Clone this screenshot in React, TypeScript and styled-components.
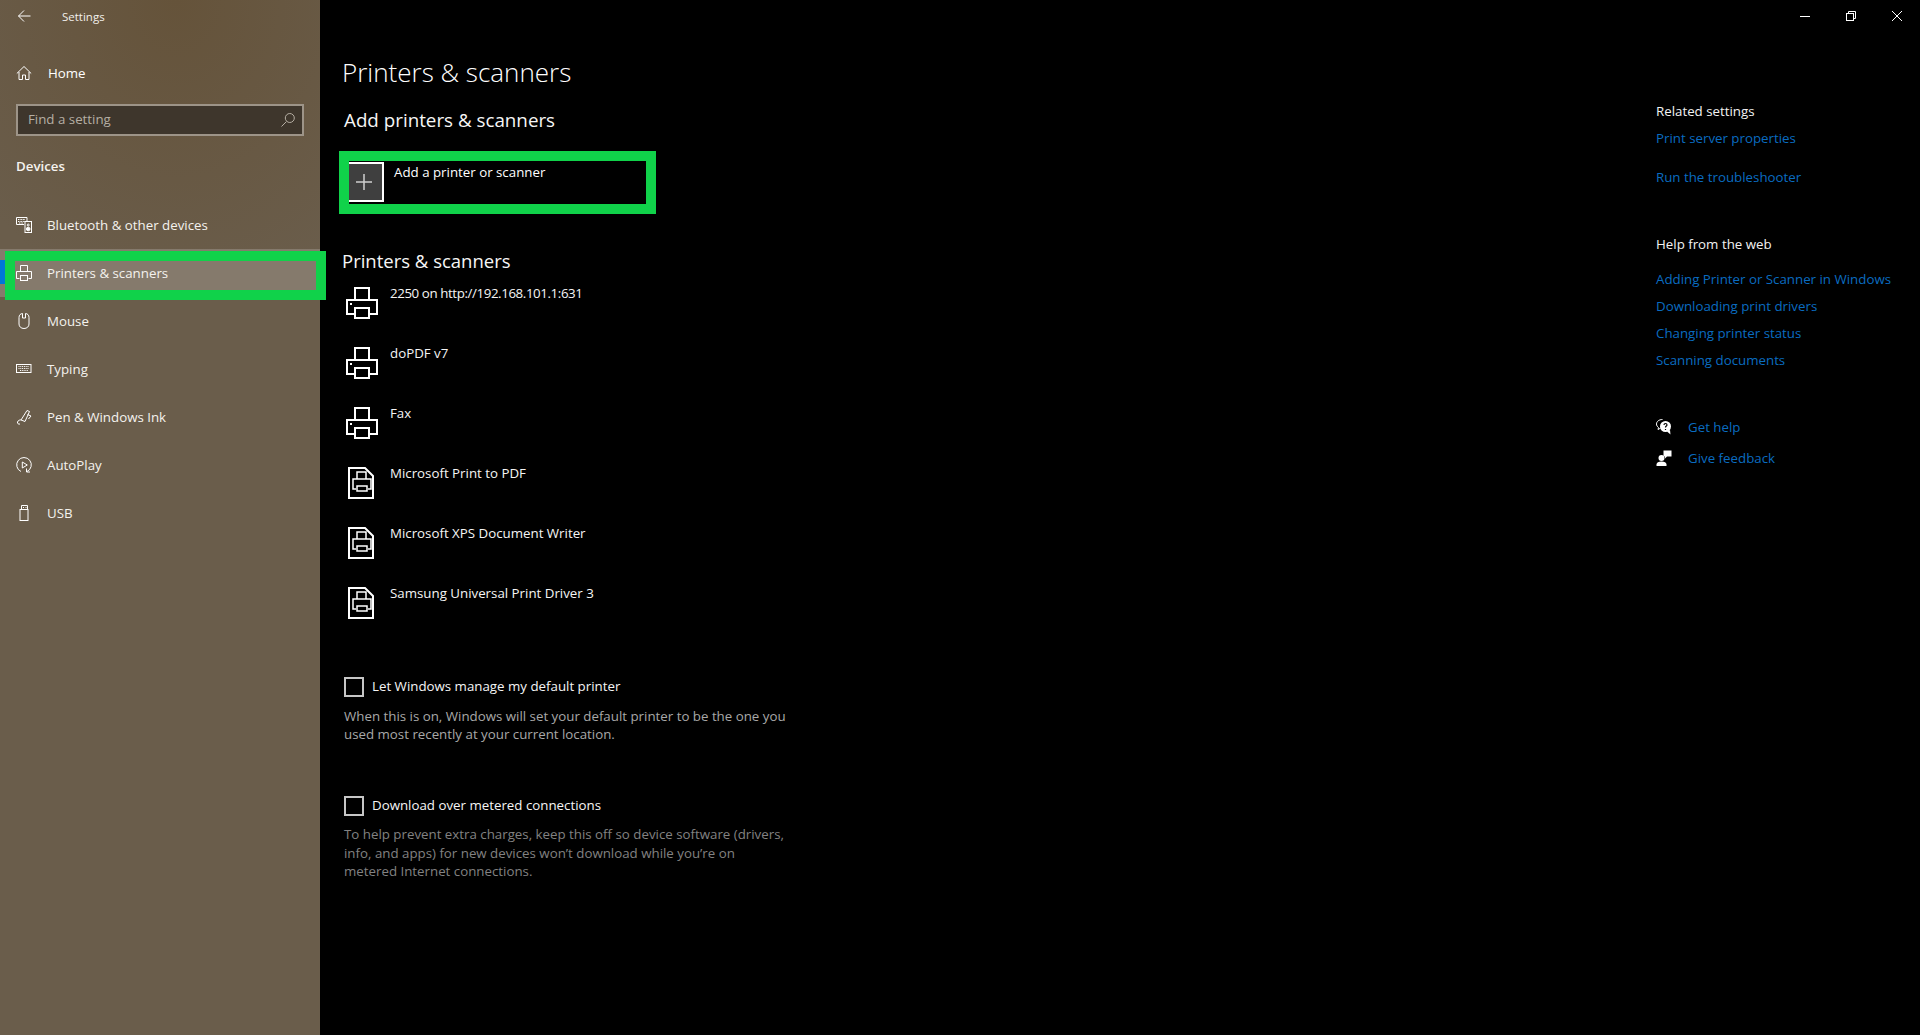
import React from "react";
import styled, { createGlobalStyle } from "styled-components";

const Global = createGlobalStyle`
  html, body { margin: 0; padding: 0; background: #000; }
  * { box-sizing: border-box; }
  body { font-family: "Open Sans", "Noto Sans", "Liberation Sans", sans-serif; font-size: 13.3px; color: #fff; }
`;

const Page = styled.div`
  display: flex;
  width: 1920px;
  height: 1035px;
  overflow: hidden;
  background: #000;
`;

const Sidebar = styled.aside`
  flex: 0 0 320px;
  height: 100%;
  display: flex;
  flex-direction: column;
  background: radial-gradient(ellipse 260px 300px at 55% 0, #65533a 0%, #6a5d4b 100%);
`;

const TitleBar = styled.div`
  height: 34px;
  display: flex;
  align-items: center;
  padding: 0 0 2px 16px;
  font-size: 11.5px;
  color: #f2f0ec;
`;

const BackIcon = styled.svg`
  width: 16px;
  height: 16px;
  margin-right: 30px;
  margin-top: -1px;
`;

const HomeRow = styled.div`
  height: 48px;
  margin-top: 15px;
  display: flex;
  align-items: center;
  gap: 16px;
  padding-left: 16px;
  color: #fff;
`;

const IconBox = styled.svg`
  width: 16px;
  height: 16px;
  flex: 0 0 16px;
  color: #fff;
`;

const Search = styled.div`
  height: 32px;
  margin: 7px 16px 0;
  border: 2px solid #9d9488;
  background: #3e362c;
  display: flex;
  align-items: center;
  justify-content: space-between;
  padding: 0 6px 0 10px;
  color: #b5aea3;
`;

const SearchText = styled.span`
  margin-top: -2px;
`;

const SearchIcon = styled(IconBox)`
  color: #b5aea3;
`;

const SectionLabel = styled.div`
  height: 20px;
  line-height: 20px;
  margin: 20px 0 0 16px;
  font-weight: 600;
  color: #f5f3ef;
`;

const NavList = styled.nav`
  margin-top: 25px;
  display: flex;
  flex-direction: column;
`;

const NavRow = styled.div<{ $active?: boolean }>`
  position: relative;
  height: 48px;
  display: flex;
  align-items: center;
  gap: 15px;
  padding-left: 16px;
  color: #f4f2ee;
  background: ${(p) => (p.$active ? "#857a6c" : "transparent")};
`;

const Accent = styled.span`
  position: absolute;
  left: 0;
  top: 11px;
  width: 5px;
  height: 24px;
  background: #0078d7;
`;

const Callout = styled.span<{ $l: number; $t: number; $w: number; $h: number }>`
  position: absolute;
  left: ${(p) => p.$l}px;
  top: ${(p) => p.$t}px;
  width: ${(p) => p.$w}px;
  height: ${(p) => p.$h}px;
  border: 10px solid #10d24a;
  z-index: 5;
  pointer-events: none;
`;

const Main = styled.main`
  flex: 1;
  display: flex;
  flex-direction: column;
  min-width: 0;
`;

const WindowBar = styled.div`
  height: 34px;
  display: flex;
  justify-content: flex-end;
`;

const WindowButton = styled.div`
  width: 46px;
  height: 34px;
  display: flex;
  align-items: center;
  justify-content: center;
  padding-bottom: 2px;
`;

const Content = styled.div`
  flex: 1;
  display: flex;
  justify-content: space-between;
`;

const LeftColumn = styled.section`
  padding: 18px 0 0 22px;
  display: flex;
  flex-direction: column;
  align-items: flex-start;
`;

const PageTitle = styled.h1`
  margin: 0;
  font-size: 26px;
  font-weight: 300;
  line-height: 40px;
  color: #fff;
`;

const SubTitle = styled.h2<{ $top: number; $left: number; $size: number }>`
  margin: ${(p) => p.$top}px 0 0 ${(p) => p.$left}px;
  font-size: ${(p) => p.$size}px;
  font-weight: 400;
  line-height: 28px;
  color: #f6f6f6;
`;

const AddRow = styled.div`
  position: relative;
  margin: 28px 0 0 2px;
  display: flex;
  gap: 10px;
  height: 40px;
`;

const AddTile = styled.div`
  width: 40px;
  height: 40px;
  background: #3f3f3f;
  border: 2px solid #fff;
  display: flex;
  align-items: center;
  justify-content: center;
`;

const AddLabel = styled.div`
  line-height: 20px;
  color: #fff;
`;

const PrinterList = styled.div`
  margin-top: 8px;
  display: flex;
  flex-direction: column;
`;

const PrinterRow = styled.div`
  height: 60px;
  display: flex;
  gap: 12px;
  padding-left: 4px;
`;

const PrinterIcon = styled.svg`
  width: 32px;
  height: 32px;
  margin-top: 4px;
  flex: 0 0 32px;
`;

const PrinterName = styled.div<{ $tight?: boolean }>`
  line-height: 20px;
  color: #f5f5f5;
  letter-spacing: ${(p) => (p.$tight ? "-0.4px" : "0")};
`;

const CheckRow = styled.div<{ $top: number }>`
  margin: ${(p) => p.$top}px 0 0 2px;
  display: flex;
  align-items: center;
  gap: 8px;
  height: 20px;
  color: #f5f5f5;
`;

const CheckBox = styled.span`
  width: 20px;
  height: 20px;
  border: 2px solid #c6c6c6;
`;

const CheckLabel = styled.span`
  margin-top: -2px;
`;

const Description = styled.p<{ $dim?: boolean }>`
  margin: ${(p) => (p.$dim ? "9.6px" : "10px")} 0 0 2px;
  line-height: 18.4px;
  color: ${(p) => (p.$dim ? "#828282" : "#a8a8a8")};
`;

const Aside = styled.aside`
  width: 264px;
  padding-top: 67px;
  display: flex;
  flex-direction: column;
`;

const AsideHeading = styled.div<{ $top?: number }>`
  height: 20px;
  line-height: 20px;
  margin-top: ${(p) => p.$top ?? 0}px;
  color: #f2f2f2;
`;

const AsideLink = styled.a<{ $top: number }>`
  display: block;
  height: 20px;
  line-height: 20px;
  margin-top: ${(p) => p.$top}px;
  color: #0a6cc0;
`;

const HelpRow = styled.div<{ $top: number }>`
  display: flex;
  align-items: center;
  gap: 16px;
  height: 20px;
  margin-top: ${(p) => p.$top}px;
  color: #0a6cc0;
`;

const s = { fill: "none", stroke: "currentColor", strokeWidth: 1 } as const;

const navItems: { label: string; icon: React.ReactNode; active?: boolean }[] = [
  {
    label: "Bluetooth & other devices",
    icon: (
      <g {...s}>
        <path d="M11 4.500V.5H.5v7H8" />
        <path d="M2 2.500h7M2 4.500h7M3 6h4" strokeDasharray="1 .6" />
        <rect x="9" y="4.500" width="6.500" height="11" />
        <circle cx="12.200" cy="8" r="1" />
        <circle cx="12.200" cy="12" r="1.800" fill="currentColor" />
      </g>
    ),
  },
  {
    label: "Printers & scanners",
    active: true,
    icon: (
      <g {...s}>
        <path d="M4.500 6V.5h7V6" />
        <path d="M3.500 13.500H.5v-7h15v7h-3" />
        <rect x="4.500" y="10.500" width="7" height="5" />
      </g>
    ),
  },
  {
    label: "Mouse",
    icon: (
      <g {...s}>
        <path d="M6.500.5C4.500.7 3 2 3 4.500v6.500c0 2.600 2 4.500 5 4.500s5-1.900 5-4.500V4.500C13 2 11.500.7 9.500.5V5h-3z" />
      </g>
    ),
  },
  {
    label: "Typing",
    icon: (
      <g {...s}>
        <rect x=".5" y="3.500" width="14.500" height="8" />
        <path d="M2.500 5.500h10.500M2.500 7.500h10.500M4 9.500h8" strokeDasharray="1 .8" />
      </g>
    ),
  },
  {
    label: "Pen & Windows Ink",
    icon: (
      <g {...s}>
        <path d="M5 11 11 1.500l2.500 1L9 12.500z" />
        <path d="M11.500 5.500 15 7l-2.500 3" />
        <path d="M5 11c-1-.5-3 .5-3.500 2-.5 1.500 1 2.500 2.500 2" />
      </g>
    ),
  },
  {
    label: "AutoPlay",
    icon: (
      <g {...s}>
        <path d="M5 14.500A7.300 7.300 0 1 1 11 14.500" />
        <path d="M6.300 5v6l5-3z" />
        <path d="M10.500 11.500v3.500H14" />
      </g>
    ),
  },
  {
    label: "USB",
    icon: (
      <g {...s}>
        <path d="M5.500 4.500V.5h6v4" />
        <rect x="4" y="4.500" width="8" height="11" />
        <path d="M7 2.500h1M9.500 2.500h1" />
      </g>
    ),
  },
];

const Printer = () => (
  <PrinterIcon viewBox="0 0 32 32" fill="none" stroke="#fff" strokeWidth={2}>
    <path d="M9 12V1h14v11" />
    <path d="M8 27H1V13h30v14h-7" />
    <rect x="9" y="21" width="14" height="10" />
    <rect x="4" y="16" width="2" height="2" fill="#fff" stroke="none" />
  </PrinterIcon>
);

const DocPrinter = () => (
  <PrinterIcon viewBox="0 0 32 32" fill="none" stroke="#fff" strokeWidth={2}>
    <path d="M3 1h16l8 8v22H3z" />
    <path d="M11 12V5h9v7" strokeWidth={1.500} />
    <path d="M10 22H7V12h18v10h-3" strokeWidth={1.500} />
    <rect x="11" y="19" width="10" height="5" strokeWidth={1.500} />
  </PrinterIcon>
);

const printers = [
  { name: "2250 on http://192.168.101.1:631", doc: false, tight: true },
  { name: "doPDF v7", doc: false },
  { name: "Fax", doc: false },
  { name: "Microsoft Print to PDF", doc: true },
  { name: "Microsoft XPS Document Writer", doc: true },
  { name: "Samsung Universal Print Driver 3", doc: true },
];

export default function App() {
  return (
    <Page>
      <Global />
      <Sidebar>
        <TitleBar>
          <BackIcon viewBox="0 0 16 16" fill="none" stroke="#fff" strokeWidth={1}>
            <path d="M2.500 8H14.500M8 2.500 2.500 8 8 13.500" />
          </BackIcon>
          Settings
        </TitleBar>
        <HomeRow>
          <IconBox viewBox="0 0 16 16">
            <g {...s}>
              <path d="M.8 8.500 8 1.500l7.200 7" />
              <path d="M3 7v7.500h3.500V10h3v4.500H13V7" />
            </g>
          </IconBox>
          Home
        </HomeRow>
        <Search>
          <SearchText>Find a setting</SearchText>
          <SearchIcon viewBox="0 0 16 16">
            <g {...s}>
              <circle cx="9.800" cy="6" r="4.500" />
              <path d="M6.500 9.500 1.500 14.500" />
            </g>
          </SearchIcon>
        </Search>
        <SectionLabel>Devices</SectionLabel>
        <NavList>
          {navItems.map((item) => (
            <NavRow key={item.label} $active={item.active}>
              {item.active && <Accent />}
              <IconBox viewBox="0 0 16 16">{item.icon}</IconBox>
              {item.label}
              {item.active && <Callout $l={5} $t={2} $w={321} $h={49} />}
            </NavRow>
          ))}
        </NavList>
      </Sidebar>
      <Main>
        <WindowBar>
          <WindowButton>
            <svg width="10" height="10" viewBox="0 0 10 10" stroke="#fff" strokeWidth={1}>
              <path d="M0 5.500h10" />
            </svg>
          </WindowButton>
          <WindowButton>
            <svg width="10" height="10" viewBox="0 0 10 10" fill="none" stroke="#fff" strokeWidth={1}>
              <rect x=".5" y="2.500" width="7" height="7" />
              <path d="M2.500 2.500V.5h7v7h-2" />
            </svg>
          </WindowButton>
          <WindowButton>
            <svg width="10" height="10" viewBox="0 0 10 10" stroke="#fff" strokeWidth={1}>
              <path d="M0 0l10 10M10 0 0 10" />
            </svg>
          </WindowButton>
        </WindowBar>
        <Content>
          <LeftColumn>
            <PageTitle>Printers &amp; scanners</PageTitle>
            <SubTitle $top={14} $left={2} $size={18.8}>Add printers &amp; scanners</SubTitle>
            <AddRow>
              <AddTile>
                <svg width="16" height="16" viewBox="0 0 16 16" stroke="#d0d0d0" strokeWidth={1.500}>
                  <path d="M8 0v16M0 8h16" />
                </svg>
              </AddTile>
              <AddLabel>Add a printer or scanner</AddLabel>
              <Callout $l={-5} $t={-11} $w={317} $h={63} />
            </AddRow>
            <SubTitle $top={45} $left={0} $size={18.5}>Printers &amp; scanners</SubTitle>
            <PrinterList>
              {printers.map((p) => (
                <PrinterRow key={p.name}>
                  {p.doc ? <DocPrinter /> : <Printer />}
                  <PrinterName $tight={p.tight}>{p.name}</PrinterName>
                </PrinterRow>
              ))}
            </PrinterList>
            <CheckRow $top={34}>
              <CheckBox />
              <CheckLabel>Let Windows manage my default printer</CheckLabel>
            </CheckRow>
            <Description>
              When this is on, Windows will set your default printer to be the one you
              <br />
              used most recently at your current location.
            </Description>
            <CheckRow $top={52}>
              <CheckBox />
              <CheckLabel>Download over metered connections</CheckLabel>
            </CheckRow>
            <Description $dim>
              To help prevent extra charges, keep this off so device software (drivers,
              <br />
              info, and apps) for new devices won’t download while you’re on
              <br />
              metered Internet connections.
            </Description>
          </LeftColumn>
          <Aside>
            <AsideHeading>Related settings</AsideHeading>
            <AsideLink $top={7}>Print server properties</AsideLink>
            <AsideLink $top={19}>Run the troubleshooter</AsideLink>
            <AsideHeading $top={47}>Help from the web</AsideHeading>
            <AsideLink $top={15}>Adding Printer or Scanner in Windows</AsideLink>
            <AsideLink $top={7}>Downloading print drivers</AsideLink>
            <AsideLink $top={7}>Changing printer status</AsideLink>
            <AsideLink $top={7}>Scanning documents</AsideLink>
            <HelpRow $top={47}>
              <IconBox viewBox="0 0 16 16">
                <path d="M6.500.5C3 .5.500 2.500.500 5c0 1.500.8 2.700 2 3.500L2 10.500l2.500-1.300" fill="none" stroke="#fff" />
                <circle cx="9.500" cy="7.500" r="5.500" fill="#fff" />
                <path d="M11 12.500l3.500 3-.5-4.500z" fill="#fff" />
                <path d="M8 6c0-2 3-2 3 0 0 1.200-1.500 1-1.500 2.500M9.500 10v1" stroke="#000" strokeWidth={1.200} fill="none" />
              </IconBox>
              Get help
            </HelpRow>
            <HelpRow $top={11}>
              <IconBox viewBox="0 0 16 16" fill="#fff">
                <circle cx="5.500" cy="8" r="3" />
                <path d="M.5 16v-1.500C.5 12.500 2.500 11.500 5.500 11.500s5 1 5 3V16z" />
                <path d="M7.500.5H15.500V6.500H11L9 8.500V6.500H7.500z" />
              </IconBox>
              Give feedback
            </HelpRow>
          </Aside>
        </Content>
      </Main>
    </Page>
  );
}
